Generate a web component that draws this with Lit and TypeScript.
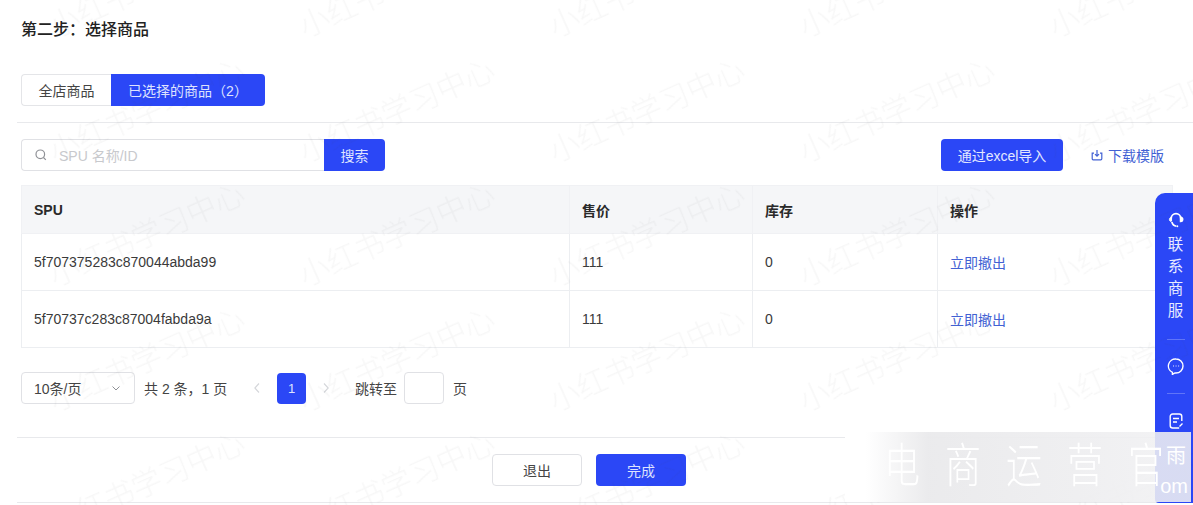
import { LitElement, html, css } from "lit";
import { customElement } from "lit/decorators.js";

const PRIMARY = css`#2b47f6`;

const MARKS: [number, number][] = [];
for (const y of [42, 167, 291, 416, 540]) {
  for (const x of [57, 307, 557, 807, 1057]) MARKS.push([x, y]);
}

const ROWS = [
  { spu: "5f707375283c870044abda99", price: "111", stock: "0" },
  { spu: "5f70737c283c87004fabda9a", price: "111", stock: "0" },
];

const STAMP = ["电", "商", "运", "营", "官"];

@customElement("app-root")
export class AppRoot extends LitElement {
  static styles = css`
    :host {
      display: block;
      width: 1193px;
      height: 505px;
      position: relative;
      overflow: hidden;
      background: #fff;
      color: #333;
      font-family: "Liberation Sans", "Noto Sans CJK SC", sans-serif;
      font-size: 14px;
    }
    .page { padding: 20px 0 0 17px; }
    .inset { padding-left: 4px; }
    .title { height: 20px; line-height: 20px; font-weight: 500; color: #222; font-size: 16px; }
    .tabs { display: flex; margin-top: 34px; height: 32px; }
    .tab { box-sizing: border-box; display: flex; align-items: center; justify-content: center; height: 32px; }
    .tab.off { width: 90px; border: 1px solid #e4e5e8; border-right: 0; border-radius: 4px 0 0 4px; color: #444; }
    .tab.on { width: 154px; background: ${PRIMARY}; color: #dfe4ff; border-radius: 0 4px 4px 0; }
    .rule { height: 1px; background: #e8e9ec; }
    .r1 { margin-top: 16px; }
    .r2 { margin-top: 33px; }
    .r3 { margin-top: 16px; }
    .tools { display: flex; align-items: center; margin-top: 16px; height: 32px; }
    .search { box-sizing: border-box; width: 303px; height: 32px; border: 1px solid #e0e1e5; border-right: 0; border-radius: 4px 0 0 4px; display: flex; align-items: center; padding-left: 12px; color: #c8c9cd; gap: 11px; }
    .search svg { width: 14px; height: 14px; }
    .btn-search { width: 61px; height: 32px; background: ${PRIMARY}; color: #dfe4ff; border-radius: 0 4px 4px 0; display: flex; align-items: center; justify-content: center; }
    .btn-import { margin-left: 556px; width: 122px; height: 32px; background: ${PRIMARY}; color: #e3e7ff; border-radius: 4px; display: flex; align-items: center; justify-content: center; }
    .dl { margin-left: 28px; display: flex; align-items: center; gap: 5px; color: #4261d4; }
    .dl svg { width: 12px; height: 12px; }
    table { margin-top: 14px; width: 1151px; border-collapse: collapse; table-layout: fixed; }
    .c1 { width: 548px; } .c2 { width: 183px; } .c3 { width: 185px; } .c4 { width: 235px; }
    th, td { text-align: left; padding: 0 0 0 12px; border: 1px solid #eceef1; font-weight: normal; color: #3a3a3a; font-size: 14px; }
    th { height: 47px; background: #f5f6f8; font-weight: 700; color: #2a2a2a; border-color: #f0f1f4; }
    td { height: 56px; }
    a { color: #4261d4; text-decoration: none; }
    .pager { display: flex; align-items: center; margin-top: 24px; height: 32px; color: #444; }
    .size { box-sizing: border-box; width: 114px; height: 32px; border: 1px solid #e0e1e5; border-radius: 4px; display: flex; align-items: center; justify-content: space-between; padding: 0 12px; }
    .size svg { width: 12px; height: 12px; }
    .total { margin-left: 9px; width: 106px; white-space: pre; }
    .arrow { width: 14px; height: 14px; }
    .cur { margin: 0 13px; width: 29px; height: 31px; background: ${PRIMARY}; color: #dfe4ff; border-radius: 4px; display: flex; align-items: center; justify-content: center; font-size: 13px; }
    .jump { margin-left: 22px; }
    .jump-box { box-sizing: border-box; margin: 0 9px 0 7px; width: 40px; height: 32px; border: 1px solid #e0e1e5; border-radius: 4px; }
    .footer { display: flex; gap: 14px; padding-left: 475px; margin-top: 16px; }
    .fb { box-sizing: border-box; width: 90px; height: 32px; border-radius: 4px; display: flex; align-items: center; justify-content: center; }
    .fb.ghost { border: 1px solid #e0e1e5; color: #444; }
    .fb.main { background: ${PRIMARY}; color: #dfe4ff; }
    .side { position: absolute; left: 1155px; top: 193px; width: 38px; height: 310px; background: ${PRIMARY}; border-radius: 10px 0 0 4px; display: flex; flex-direction: column; align-items: center; padding: 18px 0 0 3px; box-sizing: border-box; color: #e8ebff; }
    .side svg { width: 18px; height: 18px; display: block; flex: none; }
    .vt { margin-top: 5px; width: 16px; font-size: 15.5px; line-height: 22px; text-align: center; }
    .sr { width: 18px; height: 1px; background: rgba(255,255,255,.25); }
    .sr.a { margin-top: 17px; }
    .sr.b { margin-top: 18px; }
    .i1 { margin-top: 17px; }
    .i2 { margin-top: 18px; }
    .mark { position: absolute; white-space: nowrap; font-size: 30px; font-weight: 300; color: rgba(60,60,70,.045); filter: blur(.5px); transform-origin: 0 100%; transform: rotate(-24deg); line-height: 1; pointer-events: none; }
    .stamp { position: absolute; left: 845px; top: 432px; width: 346px; height: 70px; background: linear-gradient(90deg, #fff 0, #fff 6%, rgba(234,234,236,.97) 24%, rgba(238,238,240,.92) 70%, rgba(240,240,242,.88) 90%, rgba(240,240,242,.88) 100%); }
    .stamp .word { position: absolute; left: 39px; top: 9px; display: flex; gap: 25px; color: #fff; font-size: 36px; font-weight: 300; line-height: 50px; white-space: nowrap; transform: scaleY(1.3); }
    .stamp .ghost { position: absolute; left: 321px; top: 12px; color: #fff; font-size: 20px; line-height: 24px; }
    .stamp .com { position: absolute; right: 3px; bottom: 6px; color: #fff; font-size: 20px; line-height: 20px; }
  `;

  render() {
    return html`
      <div class="page">
        <div class="inset title">第二步：选择商品</div>
        <div class="inset tabs">
          <div class="tab off">全店商品</div>
          <div class="tab on">已选择的商品（2）</div>
        </div>
        <div class="rule r1"></div>
        <div class="inset tools">
          <div class="search">
            <svg viewBox="0 0 14 14" fill="none" stroke="#8f9196" stroke-width="1.2"><circle cx="6.3" cy="6.3" r="4.3"/><path d="M9.5 9.5l2.3 2.3"/></svg>
            <span>SPU 名称/ID</span>
          </div>
          <div class="btn-search">搜索</div>
          <div class="btn-import">通过excel导入</div>
          <div class="dl">
            <svg viewBox="0 0 12 12" fill="none" stroke="#4261d4" stroke-width="1.2"><path d="M3 4.2H1.2v5.6a1 1 0 0 0 1 1h7.6a1 1 0 0 0 1-1V4.2H9"/><path d="M6 1v6M4 5.2L6 7.2l2-2"/></svg>
            <span>下载模版</span>
          </div>
        </div>
        <div class="inset">
          <table>
            <colgroup><col class="c1"/><col class="c2"/><col class="c3"/><col class="c4"/></colgroup>
            <tr><th>SPU</th><th>售价</th><th>库存</th><th>操作</th></tr>
            ${ROWS.map(
              (r) => html`<tr><td>${r.spu}</td><td>${r.price}</td><td>${r.stock}</td><td><a>立即撤出</a></td></tr>`
            )}
          </table>
        </div>
        <div class="inset pager">
          <div class="size">
            <span>10条/页</span>
            <svg viewBox="0 0 12 12" fill="none" stroke="#8f9196" stroke-width="1"><path d="M2.5 4.5L6 8l3.500-3.500"/></svg>
          </div>
          <span class="total">共 2 条，1 页</span>
          <svg class="arrow" viewBox="0 0 14 14" fill="none" stroke="#d4d6da" stroke-width="1.1"><path d="M9 2.500L4.800 7 9 11.500"/></svg>
          <div class="cur">1</div>
          <svg class="arrow" viewBox="0 0 14 14" fill="none" stroke="#d4d6da" stroke-width="1.1"><path d="M5 2.500L9.200 7 5 11.500"/></svg>
          <span class="jump">跳转至</span>
          <div class="jump-box"></div>
          <span>页</span>
        </div>
        <div class="rule r2"></div>
        <div class="footer">
          <div class="fb ghost">退出</div>
          <div class="fb main">完成</div>
        </div>
        <div class="rule r3"></div>
      </div>

      <div class="side">
        <svg viewBox="0 0 18 18" fill="none" stroke="#fff" stroke-width="1.7">
          <path d="M4.200 10V7.400a4.800 4.800 0 0 1 9.600 0"/>
          <path d="M13.800 6.200c1.300.4 2 1.400 1.800 2.700-.2 1.100-1 1.700-2 1.600V6.200z" fill="#fff"/>
          <path d="M4.200 6.200c-1.300.4-2 1.400-1.800 2.700.2 1 1 1.600 1.800 1.600z" fill="#fff" stroke-width=".8"/>
          <path d="M4.800 11c.8 2.500 2.400 4 4.400 4.200"/>
          <circle cx="10.300" cy="15.300" r="1" fill="#fff" stroke="none"/>
        </svg>
        <div class="vt">联系商服</div>
        <div class="sr a"></div>
        <svg class="i1" viewBox="0 0 18 18" fill="none" stroke="#fff" stroke-width="1.4">
          <path d="M9 2a7 7 0 0 1 0 14H8l-2.600 1.400V15.300A7 7 0 0 1 9 2z"/>
          <path d="M6 9h.9M8.600 9h.9M11.200 9h.9" stroke-width="1.1"/>
        </svg>
        <div class="sr b"></div>
        <svg class="i2" viewBox="0 0 18 18" fill="none" stroke="#fff" stroke-width="1.4">
          <path d="M14.800 9V4.500a2.500 2.500 0 0 0-2.500-2.500H5.700a2.500 2.500 0 0 0-2.500 2.500v9a2.500 2.500 0 0 0 2.500 2.500h6.500"/>
          <path d="M6 6.500h6M6 10h4M12.500 14.500l3-3"/>
        </svg>
      </div>

      ${MARKS.map(
        ([x, y]) => html`<span class="mark" style="left:${x}px;top:${y - 30}px">小红书学习中心</span>`
      )}

      <div class="stamp">
        <div class="word">${STAMP.map((c) => html`<span>${c}</span>`)}</div>
        <span class="ghost">雨</span>
        <span class="com">om</span>
      </div>
    `;
  }
}
